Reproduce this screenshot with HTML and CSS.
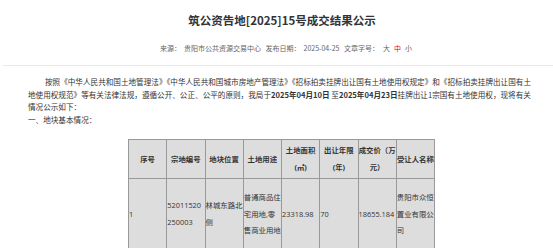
FILE: index.html
```html
<!DOCTYPE html>
<html lang="zh-CN">
<head>
    <meta charset="UTF-8">
    <meta name="viewport" content="width=device-width, initial-scale=1.0">
    <title>筑公资告地[2025]15号成交结果公示</title>
    <link rel="stylesheet" href="styles.css">
</head>
<body>
    <div class="article">
        <div class="article-head">
            <h1>筑公资告地[2025]15号成交结果公示</h1>
            <div class="meta">
                <span>来源：</span><span class="meta-value">贵阳市公共资源交易中心</span>
                <span class="meta-label">发布日期：</span><span class="meta-value">2025-04-25</span>
                <span class="meta-label">文章字号：</span><span class="font-size">大</span><span class="font-size active">中</span><span class="font-size">小</span>
            </div>
        </div>

        <div class="content">
            <p class="indent">按照《中华人民共和国土地管理法》《中华人民共和国城市房地产管理法》《招标拍卖挂牌出让国有土地使用权规定》和《招标拍卖挂牌出让国有土地使用权规范》等有关法律法规，遵循公开、公正、公平的原则，我局于<strong>2025年04月10日</strong> 至<strong>2025年04月23日</strong>挂牌出让1宗国有土地使用权，现将有关情况公示如下：</p>
            <p>一、地块基本情况：</p>

            <table class="land-table">
                <thead>
                    <tr>
                        <th>序号</th>
                        <th>宗地编号</th>
                        <th>地块位置</th>
                        <th>土地用途</th>
                        <th>土地面积(㎡)</th>
                        <th>出让年限(年)</th>
                        <th>成交价（万元）</th>
                        <th>受让人名称</th>
                    </tr>
                </thead>
                <tbody>
                    <tr>
                        <td>1</td>
                        <td>52011520250003</td>
                        <td>林城东路北侧</td>
                        <td>普通商品住宅用地,零售商业用地</td>
                        <td>23318.98</td>
                        <td>70</td>
                        <td>18655.184</td>
                        <td>贵阳市众恒置业有限公司</td>
                    </tr>
                </tbody>
            </table>
        </div>
    </div>
</body>
</html>
```

FILE: styles.css
```css
body {
    margin: 0;
    font-family: "Microsoft YaHei", "Noto Sans CJK SC", sans-serif;
    color: #333;
    background: #fff;
    overflow: hidden;
}
.article {
    width: 558px;
    margin-left: 3px;
}
.article-head {
    text-align: center;
    padding-bottom: 12px;
    border-bottom: 1px solid #e8e8e8;
}
.article-head h1 {
    margin: 0;
    padding-top: 13px;
    font-size: 11.5px;
    line-height: 15px;
    color: #333;
}
.meta {
    margin-top: 15px;
    padding-left: 8px;
    font-size: 7px;
    line-height: 10px;
    color: #666;
}
.meta-value {
    margin-left: 3px;
}
.meta-label {
    margin-left: 3px;
}
.font-size {
    margin-left: 4px;
}
.font-size.active {
    color: #e60012;
}
.content {
    padding: 10px 26px 0 25px;
    font-size: 7.6px;
    line-height: 12.5px;
}
.content p {
    margin: 0;
}
.indent {
    text-indent: 17px;
}
.land-table {
    margin: 13px auto 0;
    width: 307px;
    table-layout: fixed;
    border-collapse: collapse;
    background: #dddddd;
    font-family: "Open Sans", "Microsoft YaHei", "Noto Sans CJK SC", sans-serif;
    font-size: 7.4px;
}
.land-table th,
.land-table td {
    border: 1px solid #999;
    line-height: 17px;
    word-break: break-all;
    vertical-align: middle;
}
.land-table th {
    padding: 2px 0;
    text-align: center;
}
.land-table td {
    padding: 10px 0;
    text-align: left;
    line-height: 16.5px;
}
```
